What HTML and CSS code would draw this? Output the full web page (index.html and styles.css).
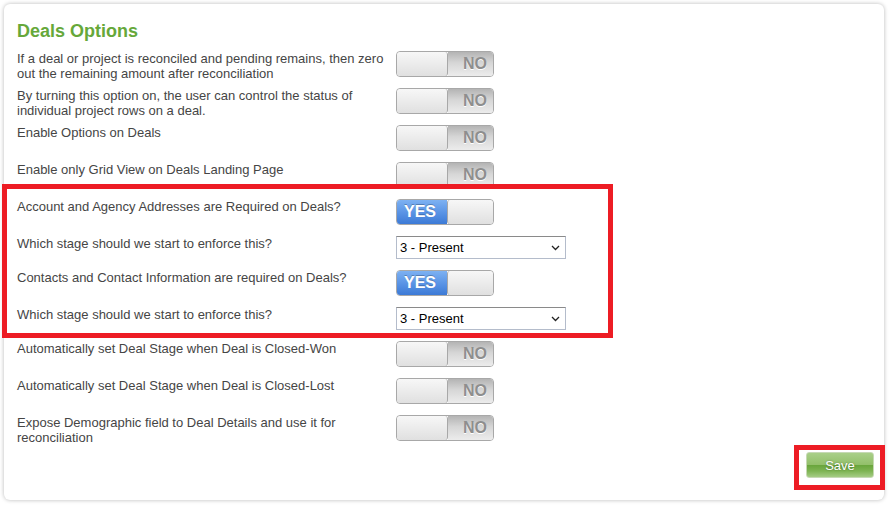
FILE: index.html
```html
<!DOCTYPE html>
<html>
<head>
<meta charset="utf-8">
<link rel="stylesheet" href="styles.css">
</head>
<body>
<div class="card">
  <h2 class="title">Deals Options</h2>
  <div class="rows">
    <div class="row">
      <div class="label">If a deal or project is reconciled and pending remains, then zero out the remaining amount after reconciliation</div>
      <div class="switch off"><span class="knob"></span><span class="side">NO</span></div>
    </div>
    <div class="row">
      <div class="label">By turning this option on, the user can control the status of individual project rows on a deal.</div>
      <div class="switch off"><span class="knob"></span><span class="side">NO</span></div>
    </div>
    <div class="row">
      <div class="label">Enable Options on Deals</div>
      <div class="switch off"><span class="knob"></span><span class="side">NO</span></div>
    </div>
    <div class="row">
      <div class="label">Enable only Grid View on Deals Landing Page</div>
      <div class="switch off"><span class="knob"></span><span class="side">NO</span></div>
    </div>
    <div class="row">
      <div class="label">Account and Agency Addresses are Required on Deals?</div>
      <div class="switch on"><span class="side">YES</span><span class="knob"></span></div>
    </div>
    <div class="row">
      <div class="label">Which stage should we start to enforce this?</div>
      <div class="select">
        <select><option>3 - Present</option></select>
        <svg class="chev" width="9" height="6" viewBox="0 0 9 6"><path d="M1 1 L4.5 4.5 L8 1" fill="none" stroke="#222" stroke-width="1.3"/></svg>
      </div>
    </div>
    <div class="row">
      <div class="label">Contacts and Contact Information are required on Deals?</div>
      <div class="switch on"><span class="side">YES</span><span class="knob"></span></div>
    </div>
    <div class="row">
      <div class="label">Which stage should we start to enforce this?</div>
      <div class="select">
        <select><option>3 - Present</option></select>
        <svg class="chev" width="9" height="6" viewBox="0 0 9 6"><path d="M1 1 L4.5 4.5 L8 1" fill="none" stroke="#222" stroke-width="1.3"/></svg>
      </div>
    </div>
    <div class="row">
      <div class="label">Automatically set Deal Stage when Deal is Closed-Won</div>
      <div class="switch off"><span class="knob"></span><span class="side">NO</span></div>
    </div>
    <div class="row">
      <div class="label">Automatically set Deal Stage when Deal is Closed-Lost</div>
      <div class="switch off"><span class="knob"></span><span class="side">NO</span></div>
    </div>
    <div class="row">
      <div class="label">Expose Demographic field to Deal Details and use it for reconciliation</div>
      <div class="switch off"><span class="knob"></span><span class="side">NO</span></div>
    </div>
  </div>
  <div class="footer">
    <button class="save">Save</button>
  </div>
</div>
<div class="mark mark-group"></div>
<div class="mark mark-save"></div>
</body>
</html>
```

FILE: styles.css
```css
html, body {
  margin: 0;
  padding: 0;
  background: #ffffff;
}
body {
  position: relative;
  width: 892px;
  height: 506px;
  font-family: "Liberation Sans", Arial, sans-serif;
  overflow: hidden;
}
.card {
  box-sizing: border-box;
  margin: 4px 0 0 4px;
  width: 880px;
  padding: 16px 10px 22px 13px;
  background: #ffffff;
  border-radius: 6px;
  box-shadow: 0 0 4px rgba(0, 0, 0, 0.28);
}
.title {
  margin: 0 0 9px 0;
  font-size: 18px;
  line-height: 22px;
  font-weight: bold;
  color: #66a83a;
}
.rows {
  display: flex;
  flex-direction: column;
}
.row {
  display: flex;
  align-items: flex-start;
  margin-bottom: 11px;
}
.label {
  width: 379px;
  font-size: 13px;
  line-height: 15px;
  color: #454545;
  margin-bottom: -4px;
}
.switch {
  box-sizing: border-box;
  display: flex;
  width: 98px;
  height: 26px;
  border: 1px solid #a8a8a8;
  border-radius: 4px;
  overflow: hidden;
  font-size: 16px;
  font-weight: bold;
  line-height: 24px;
}
.switch .knob {
  box-sizing: border-box;
  background: linear-gradient(#f7f7f7, #e0e0e0);
}
.switch.off .knob {
  width: 51px;
  border-right: 1px solid #a8a8a8;
  border-radius: 3px;
}
.switch.off .side {
  flex: 1;
  text-align: right;
  padding-right: 6px;
  color: #8e8e8e;
  text-shadow: 0 1px 0 #ffffff;
  background: linear-gradient(#b4b4b4, #d6d6d6 45%, #ececec);
}
.switch.on .side {
  width: 50px;
  padding-left: 7px;
  box-sizing: border-box;
  color: #ffffff;
  text-shadow: 0 -1px 0 rgba(0, 0, 0, 0.25);
  background: linear-gradient(#7db1f2, #5b95e6 50%, #3c7ad6);
}
.switch.on .knob {
  flex: 1;
  border-left: 1px solid #a8a8a8;
  border-radius: 3px;
}
.select {
  position: relative;
  width: 170px;
  height: 23px;
}
.select select {
  -webkit-appearance: none;
  appearance: none;
  box-sizing: border-box;
  width: 170px;
  height: 23px;
  margin: 0;
  padding: 0 0 0 3px;
  border: 1px solid #b4bccb;
  border-top-color: #8a8a8a;
  border-radius: 0;
  background: #ffffff;
  font-family: "Liberation Sans", Arial, sans-serif;
  font-size: 13px;
  color: #000000;
  outline: none;
}
.chev {
  position: absolute;
  left: 155px;
  top: 9px;
}
.footer {
  display: flex;
  justify-content: flex-end;
  margin-top: 0;
}
.save {
  box-sizing: border-box;
  width: 68px;
  height: 26px;
  border: 1px solid #c6d9b4;
  border-radius: 3px;
  background: linear-gradient(#a9cf88, #93c06b 48%, #6aa63d 52%, #7eb453 75%, #a5cc84);
  color: #ffffff;
  font-family: "Liberation Sans", Arial, sans-serif;
  font-size: 13px;
  text-shadow: 0 0 2px rgba(0, 0, 0, 0.35);
  padding: 0;
  cursor: pointer;
}
.mark {
  position: absolute;
  box-sizing: border-box;
  border: 5px solid #ed1c24;
  pointer-events: none;
}
.mark-group {
  left: 2px;
  top: 184px;
  width: 611px;
  height: 154px;
}
.mark-save {
  left: 794px;
  top: 445px;
  width: 91px;
  height: 45px;
}
```
